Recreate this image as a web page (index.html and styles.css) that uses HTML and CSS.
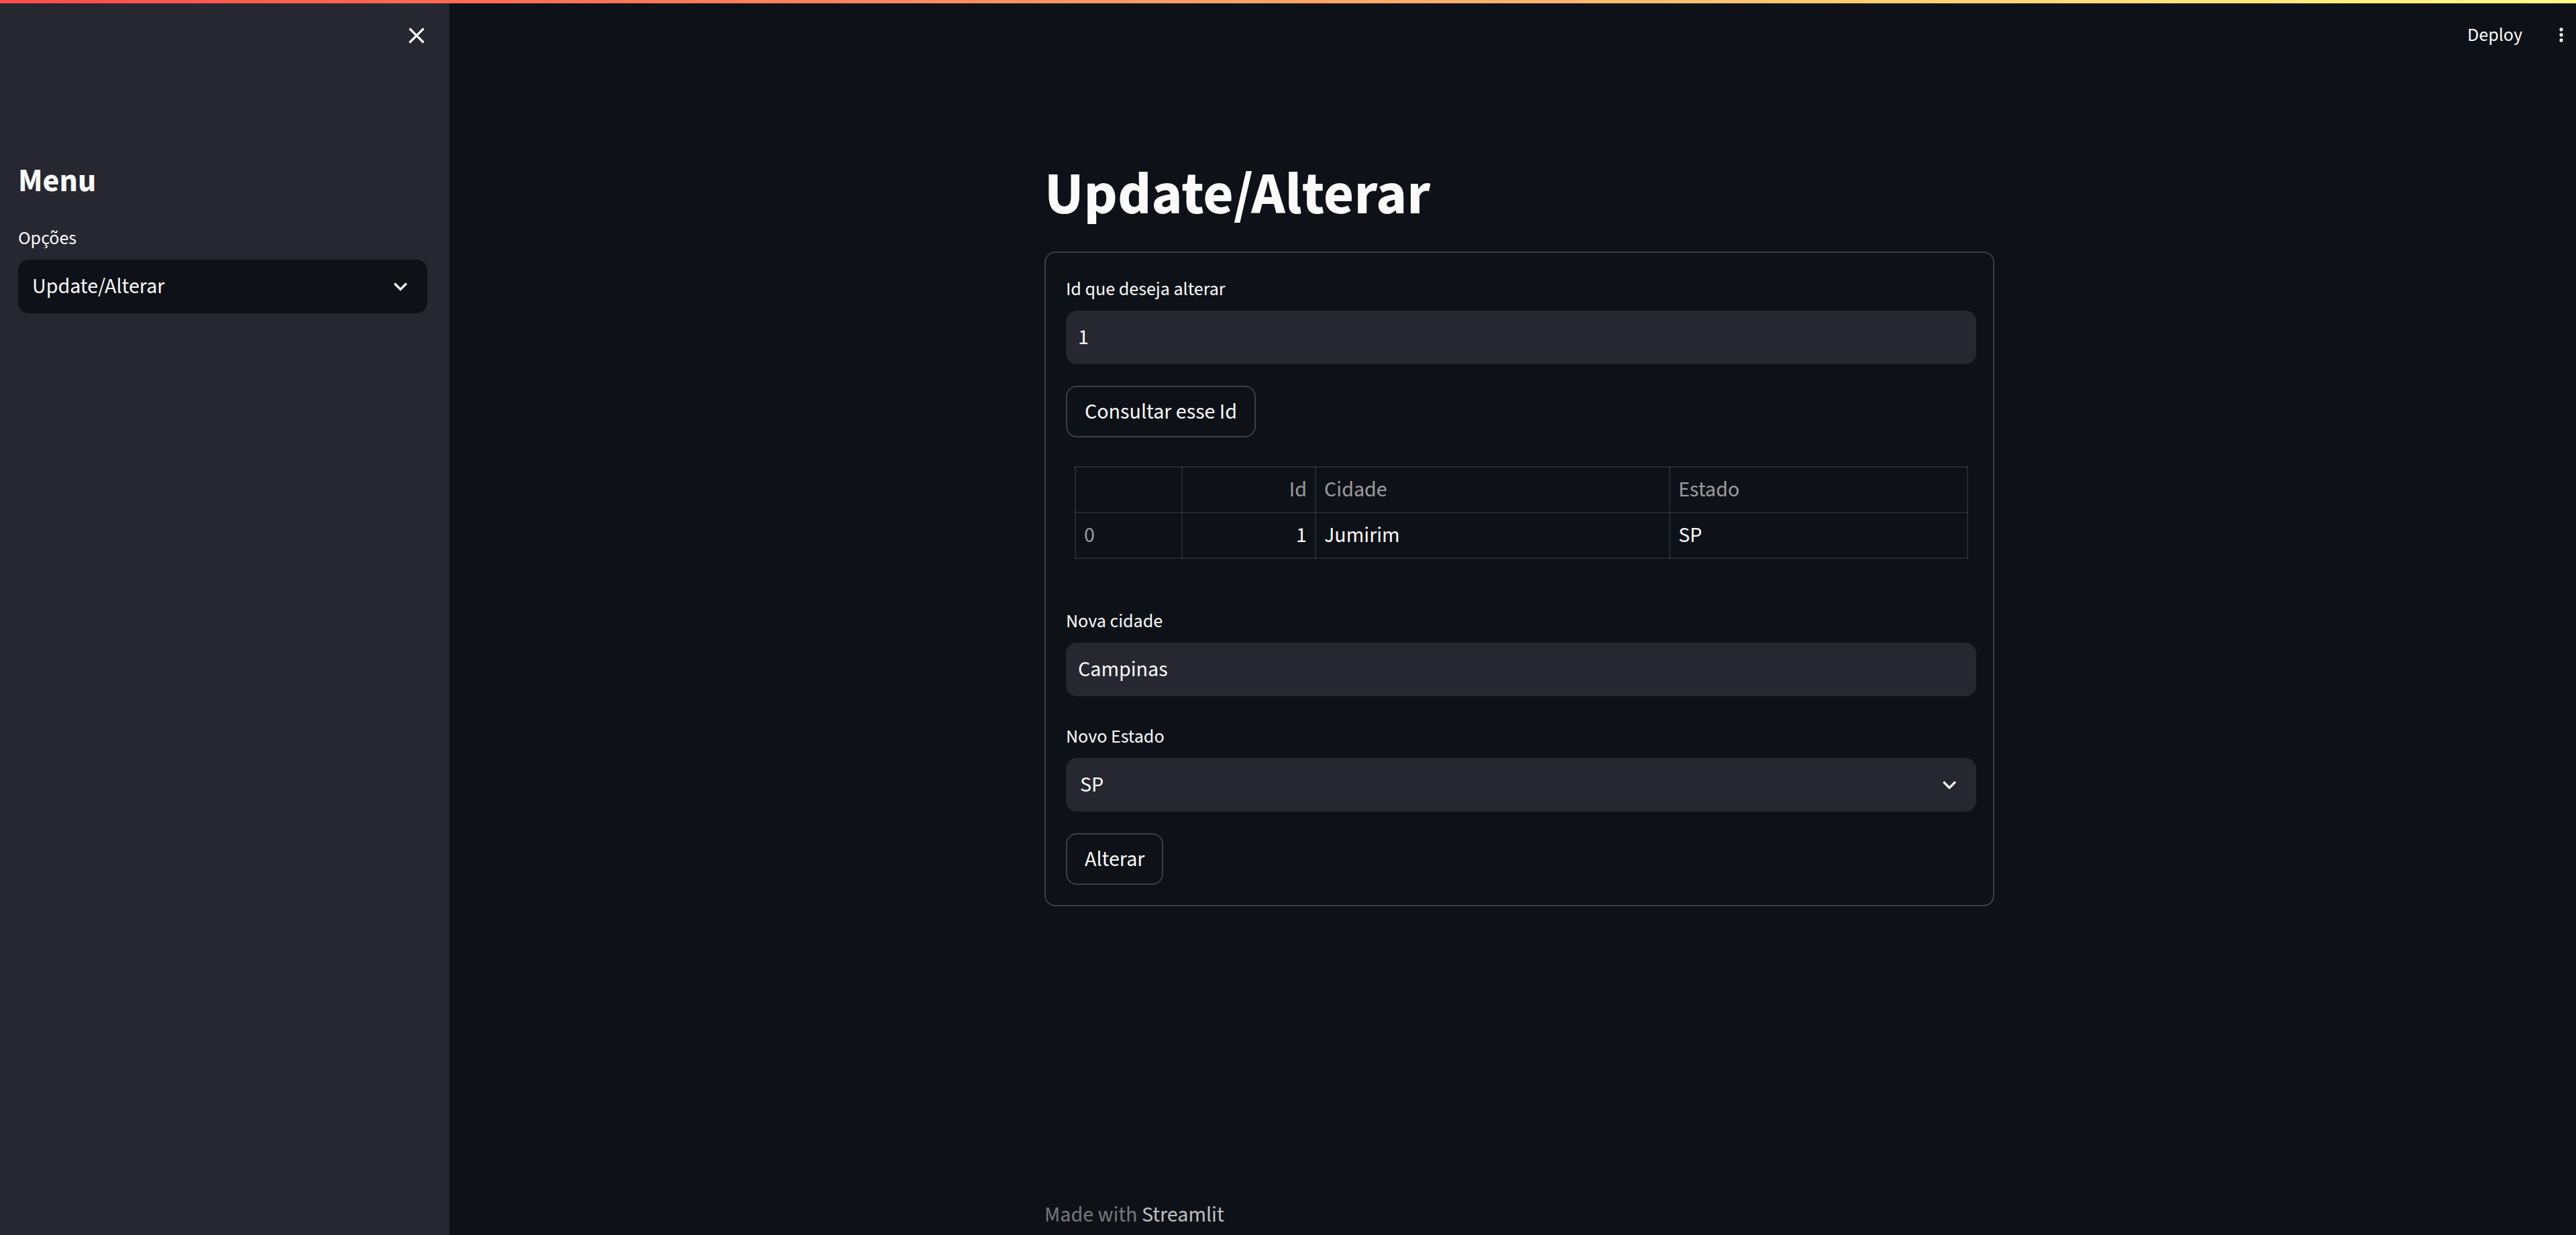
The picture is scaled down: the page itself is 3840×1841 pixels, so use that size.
FILE: index.html
```html
<!DOCTYPE html>
<html lang="pt-BR">
<head>
<meta charset="utf-8">
<title>Update/Alterar</title>
<link rel="stylesheet" href="styles.css">
</head>
<body>
<div class="decoration"></div>
<div class="app">
  <aside class="sidebar">
    <div class="sidebar-top">
      <span class="icon-btn" aria-label="Fechar">
        <svg class="close-icon" viewBox="0 0 24 24"><path d="M19 6.41L17.59 5 12 10.59 6.41 5 5 6.41 10.59 12 5 17.59 6.41 19 12 13.41 17.59 19 19 17.59 13.41 12z"/></svg>
      </span>
    </div>
    <div class="sidebar-content">
      <h2 class="sidebar-title">Menu</h2>
      <div class="label">Opções</div>
      <div class="select select-dark">
        <span>Update/Alterar</span>
        <svg class="chevron" viewBox="0 0 24 24"><path d="M7.41 8.59L12 13.17l4.59-4.58L18 10l-6 6-6-6 1.41-1.41z"/></svg>
      </div>
    </div>
  </aside>
  <main class="main">
    <header class="header">
      <span class="deploy">Deploy</span>
      <svg class="kebab" viewBox="0 0 24 24"><path d="M12 8c1.1 0 2-.9 2-2s-.9-2-2-2-2 .9-2 2 .9 2 2 2zm0 2c-1.1 0-2 .9-2 2s.9 2 2 2 2-.9 2-2-.9-2-2-2zm0 6c-1.1 0-2 .9-2 2s.9 2 2 2 2-.9 2-2-.9-2-2-2z"/></svg>
    </header>
    <div class="content">
      <h1 class="title">Update/Alterar</h1>
      <div class="card">
        <div class="field">
          <div class="label">Id que deseja alterar</div>
          <div class="input">1</div>
        </div>
        <div class="btn-row"><span class="btn">Consultar esse Id</span></div>
        <div class="table-wrap">
          <table class="data">
            <colgroup>
              <col class="c-idx"><col class="c-id"><col class="c-cidade"><col>
            </colgroup>
            <thead>
              <tr><th></th><th class="num">Id</th><th>Cidade</th><th>Estado</th></tr>
            </thead>
            <tbody>
              <tr><th>0</th><td class="num">1</td><td>Jumirim</td><td>SP</td></tr>
            </tbody>
          </table>
        </div>
        <div class="field field-spaced">
          <div class="label">Nova cidade</div>
          <div class="input">Campinas</div>
        </div>
        <div class="field">
          <div class="label">Novo Estado</div>
          <div class="select">
            <span>SP</span>
            <svg class="chevron" viewBox="0 0 24 24"><path d="M7.41 8.59L12 13.17l4.59-4.58L18 10l-6 6-6-6 1.41-1.41z"/></svg>
          </div>
        </div>
        <div class="btn-row"><span class="btn">Alterar</span></div>
      </div>
      <footer class="footer">Made with <span class="footer-link">Streamlit</span></footer>
    </div>
  </main>
</div>
</body>
</html>
```

FILE: styles.css
```css
* { box-sizing: border-box; }

html, body {
  margin: 0;
  padding: 0;
  height: 100%;
}

body {
  background: #0e1117;
  color: #fafafa;
  font-family: "Source Sans Pro", "Source Sans 3", Lato, "Noto Sans", sans-serif;
  overflow: hidden;
}

.decoration {
  position: absolute;
  top: 0;
  left: 0;
  right: 0;
  height: 5px;
  background: linear-gradient(90deg, #ff4b4b, #fffd80);
  z-index: 10;
}

.app {
  display: flex;
  height: 100vh;
}

/* Sidebar */
.sidebar {
  width: 670px;
  flex: none;
  background: #262730;
  display: flex;
  flex-direction: column;
}

.sidebar-top {
  height: 106px;
  display: flex;
  align-items: center;
  justify-content: flex-end;
  padding-right: 29px;
}

.icon-btn {
  display: flex;
  width: 40px;
  height: 40px;
}

.close-icon {
  width: 40px;
  height: 40px;
  fill: #fafafa;
}

.sidebar-content {
  padding: 135px 33px 0 27px;
}

.sidebar-title {
  margin: 0 0 32px;
  font-size: 48px;
  line-height: 58px;
  font-weight: 700;
}

/* Labels and inputs */
.label {
  font-size: 28px;
  line-height: 48px;
  height: 48px;
  margin-bottom: 8px;
}

.field-spaced {
  margin-bottom: 4px;
}

.input,
.select {
  height: 80px;
  border-radius: 16px;
  background: #262730;
  font-size: 32px;
  line-height: 80px;
  padding: 0 18px;
}

.select {
  display: flex;
  align-items: center;
  justify-content: space-between;
  padding: 0 20px 0 21px;
}

.select-dark {
  background: #0e1117;
}

.chevron {
  width: 40px;
  height: 40px;
  fill: #fafafa;
}

/* Main */
.main {
  flex: 1;
  display: flex;
  flex-direction: column;
  min-width: 0;
}

.header {
  height: 104px;
  flex: none;
  display: flex;
  align-items: center;
  justify-content: flex-end;
  gap: 42px;
  padding-right: 6px;
}

.deploy {
  font-size: 28px;
  line-height: 40px;
}

.kebab {
  width: 32px;
  height: 32px;
  fill: #fafafa;
}

.content {
  flex: 1;
  width: 1416px;
  margin-left: calc(50% - 708px + 10px);
  padding-top: 134px;
  display: flex;
  flex-direction: column;
}

.title {
  margin: 0;
  font-size: 88px;
  line-height: 106px;
  font-weight: 700;
}

.card {
  margin-top: 31px;
  border: 2px solid rgba(250, 250, 250, 0.2);
  border-radius: 16px;
  padding: 30px 25px 30px 30px;
  display: flex;
  flex-direction: column;
  gap: 32px;
}

.btn-row {
  display: flex;
}

.btn {
  display: inline-flex;
  align-items: center;
  height: 77px;
  padding: 0 26px;
  border: 2px solid rgba(250, 250, 250, 0.2);
  border-radius: 16px;
  background: #0e1117;
  font-size: 32px;
}

/* Table */
.table-wrap {
  padding: 11px 12px 37px 13px;
}

.data {
  width: 100%;
  border-collapse: collapse;
  table-layout: fixed;
  font-size: 32px;
}

.c-idx { width: 159px; }
.c-id { width: 199px; }
.c-cidade { width: 528px; }

.data th,
.data td {
  border: 2px solid rgba(250, 250, 250, 0.1);
  padding: 12px 12px;
  line-height: 42px;
  height: 66px;
  text-align: left;
  font-weight: 400;
  vertical-align: middle;
}

.data thead th,
.data tbody th {
  color: rgba(250, 250, 250, 0.6);
}

.data .num {
  text-align: right;
}

/* Footer */
.footer {
  margin-top: auto;
  padding-bottom: 4px;
  font-size: 32px;
  line-height: 51px;
  color: rgba(250, 250, 250, 0.45);
}

.footer-link {
  color: rgba(250, 250, 250, 0.75);
}
```
